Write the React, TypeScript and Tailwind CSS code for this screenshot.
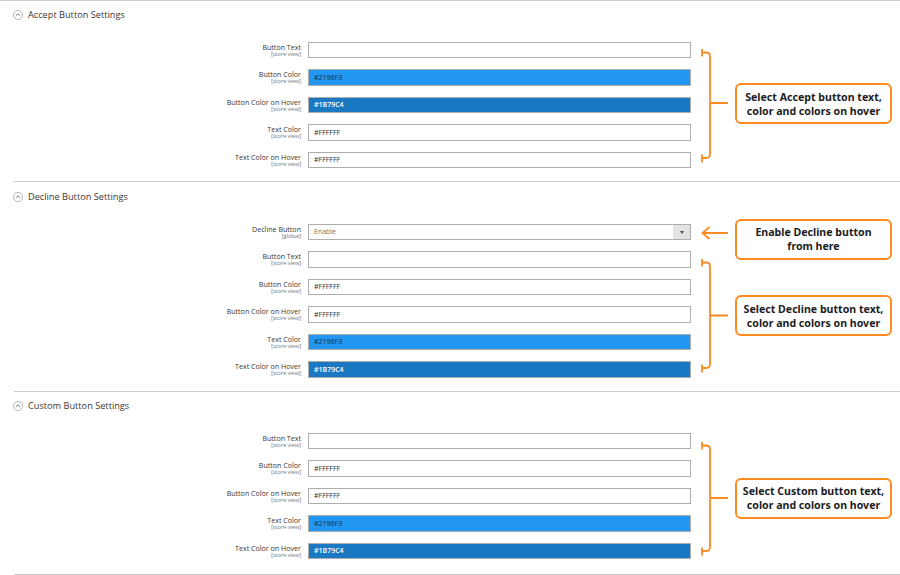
import type { ReactNode } from 'react';

type Field = { label: string; scope?: string; value?: string; tone?: 'blue' | 'dark'; select?: boolean };

const acceptFields: Field[] = [
  { label: 'Button Text' },
  { label: 'Button Color', value: '#2196F3', tone: 'blue' },
  { label: 'Button Color on Hover', value: '#1B79C4', tone: 'dark' },
  { label: 'Text Color', value: '#FFFFFF' },
  { label: 'Text Color on Hover', value: '#FFFFFF' },
];

const lightFields: Field[] = [
  { label: 'Button Text' },
  { label: 'Button Color', value: '#FFFFFF' },
  { label: 'Button Color on Hover', value: '#FFFFFF' },
  { label: 'Text Color', value: '#2196F3', tone: 'blue' },
  { label: 'Text Color on Hover', value: '#1B79C4', tone: 'dark' },
];

function FieldRow({ field }: { field: Field }) {
  let box = 'bg-white text-[#303030]';
  if (field.tone === 'blue') box = 'bg-[#2196F3] text-[#1a2b3c]';
  if (field.tone === 'dark') box = 'bg-[#1B79C4] text-white font-semibold';

  return (
    <div className="flex items-center h-[27.5px]">
      <div className="w-[301px] shrink-0 text-right">
        <div className="text-[7.1px] leading-[7px] text-[#41362f]">{field.label}</div>
        <div className="text-[6px] leading-[6px] tracking-[-0.2px] text-[#808080]">[{field.scope ?? 'store view'}]</div>
      </div>
      <div className={`ml-[7px] w-[383px] h-[16.5px] border border-[#adadad] flex items-center pl-[5px] text-[7px] ${box}`}>
        {field.select ? (
          <>
            <span className="flex-1 mt-[1px] text-[#7b6f5f]">{field.value}</span>
            <span className="w-[17px] h-full bg-[#e3e3e3] flex items-center justify-center">
              <span className="w-0 h-0 border-x-[2.5px] border-x-transparent border-t-[3px] border-t-[#514943]" />
            </span>
          </>
        ) : (
          <span className="mt-[1px]">{field.value}</span>
        )}
      </div>
    </div>
  );
}

function Bracket({ mid }: { mid: number }) {
  return (
    <svg className="shrink-0" width="35" height="114" viewBox="0 0 35 114" fill="none" stroke="#FF8A1F" strokeWidth="1.8">
      <path d={`M2 0V7.5M2 3.5H6Q10 3.5 10 7.5V105Q10 109 6 109H2M2 105.5V113.5M10 ${mid}H28`} />
    </svg>
  );
}

function Callout({ lines, className = '' }: { lines: string[]; className?: string }) {
  return (
    <div className={`w-[157px] h-[41px] shrink-0 border-2 border-[#FF8A1F] rounded-[6px] bg-white flex flex-col items-center justify-center text-[10.6px] leading-[14px] font-bold text-[#1d1d1f] font-['Noto_Sans',sans-serif] ${className}`}>
      {lines.map((line) => (
        <div key={line}>{line}</div>
      ))}
    </div>
  );
}

function Section({
  title,
  fields,
  sectionClass,
  headClass,
  bodyClass,
  children,
}: {
  title: string;
  fields: Field[];
  sectionClass: string;
  headClass: string;
  bodyClass: string;
  children: ReactNode;
}) {
  return (
    <section className={sectionClass}>
      <div className={`flex items-center gap-[5px] pl-[13px] ${headClass}`}>
        <svg width="10" height="10" viewBox="0 0 10 10" fill="none">
          <circle cx="5" cy="5" r="4.6" stroke="#9a9a9a" strokeWidth="0.7" />
          <path d="M2.8 5.8L5 3.8L7.2 5.8" stroke="#555" strokeWidth="0.8" />
        </svg>
        <span className="text-[9.2px] text-[#41362f]">{title}</span>
      </div>
      <div className={`flex ${bodyClass}`}>
        <div className="w-[691px] shrink-0">
          {fields.map((field) => (
            <FieldRow key={field.label} field={field} />
          ))}
        </div>
        <div className="flex flex-col ml-[9px]">{children}</div>
      </div>
    </section>
  );
}

export default function App() {
  return (
    <div className="w-[900px] h-[575px] overflow-hidden bg-white font-['Open_Sans',sans-serif]">
      <div className="h-px bg-[#cccccc]" />
      <Section
        title="Accept Button Settings"
        fields={acceptFields}
        sectionClass="h-[180px]"
        headClass="h-[28px]"
        bodyClass="pt-[7.3px]"
      >
        <div className="flex items-center mt-[12.7px]">
          <Bracket mid={54} />
          <Callout className="mb-[4px]" lines={['Select Accept button text,', 'color and colors on hover']} />
        </div>
      </Section>
      <div className="h-px ml-[14px] bg-[#cccccc]" />
      <Section
        title="Decline Button Settings"
        fields={[{ label: 'Decline Button', scope: 'global', value: 'Enable', select: true }, ...lightFields]}
        sectionClass="h-[209px]"
        headClass="h-[30px]"
        bodyClass="pt-[6.3px]"
      >
        <div className="flex items-center mt-[0.7px]">
          <svg className="shrink-0 mb-[13px]" width="35" height="14" viewBox="0 0 35 14" fill="none" stroke="#FF8A1F" strokeWidth="1.8">
            <path d="M28 7H2.5M9.5 1L2.5 7L9.5 13" />
          </svg>
          <Callout lines={['Enable Decline button', 'from here']} />
        </div>
        <div className="flex items-center -mt-[1px]">
          <Bracket mid={56.5} />
          <Callout lines={['Select Decline button text,', 'color and colors on hover']} />
        </div>
      </Section>
      <div className="h-px ml-[14px] bg-[#cccccc]" />
      <Section
        title="Custom Button Settings"
        fields={lightFields}
        sectionClass="h-[182px]"
        headClass="h-[28px]"
        bodyClass="pt-[7.3px]"
      >
        <div className="flex items-center mt-[14.7px]">
          <Bracket mid={56} />
          <Callout className="mb-[1px]" lines={['Select Custom button text,', 'color and colors on hover']} />
        </div>
      </Section>
      <div className="h-px ml-[14px] bg-[#cccccc]" />
    </div>
  );
}
